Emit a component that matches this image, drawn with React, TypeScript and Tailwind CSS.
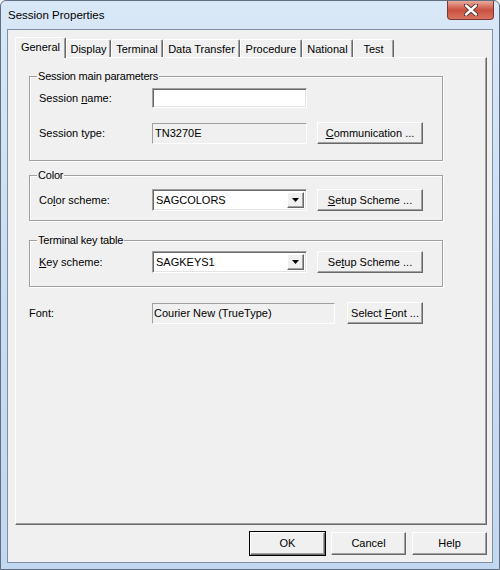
import React from 'react';

const raised =
  'border border-t-white border-l-white border-r-[#696969] border-b-[#696969] shadow-[inset_-1px_-1px_0_#a0a0a0] bg-[#f0f0f0]';
const sunken =
  'border border-t-[#a0a0a0] border-l-[#a0a0a0] border-r-white border-b-white shadow-[inset_1px_1px_0_#696969,inset_-1px_-1px_0_#e3e3e3]';

const tabs: [string, number][] = [
  ['General', 51],
  ['Display', 45],
  ['Terminal', 52],
  ['Data Transfer', 77],
  ['Procedure', 62],
  ['National', 51],
  ['Test', 41],
];

const U = ({ children }: { children: React.ReactNode }) => <span className="underline underline-offset-[1px]">{children}</span>;

function Button({ children, className = '' }: { children: React.ReactNode; className?: string }) {
  return (
    <div className={`${raised} flex items-center justify-center text-[11px] leading-none text-black ${className}`}>
      <span className="whitespace-pre">{children}</span>
    </div>
  );
}

function Combo({ value }: { value: string }) {
  return (
    <div className={`${sunken} bg-white w-[155px] h-[22px] flex items-stretch p-[2px]`}>
      <div className="flex-1 flex items-center pl-[1px] text-[11px] leading-none">{value}</div>
      <div className={`${raised} w-[17px] flex items-center justify-center`}>
        <svg width="7" height="4" viewBox="0 0 7 4">
          <path d="M0 0h7L3.5 4z" fill="#000" />
        </svg>
      </div>
    </div>
  );
}

function Group({ title, className = '', children }: { title: string; className?: string; children: React.ReactNode }) {
  return (
    <fieldset
      className={`w-[414px] border border-[#a0a0a0] shadow-[inset_1px_1px_0_#fff,1px_1px_0_#fff] pl-[9px] ${className}`}
    >
      <legend className="-ml-[2px] px-px bg-[#f0f0f0] text-[11px] leading-[13px] tracking-[-0.2px]">{title}</legend>
      {children}
    </fieldset>
  );
}

function Label({ children, w = 'w-[113px]' }: { children: React.ReactNode; w?: string }) {
  return <div className={`${w} shrink-0 text-[11px] leading-none`}>{children}</div>;
}

export default function App() {
  return (
    <div className="w-[500px] h-[570px] font-['Liberation_Sans',Arial,sans-serif] text-black">
      <div className="w-full h-full flex flex-col border border-[#5f6e80] rounded-t-[6px] bg-gradient-to-b from-[#d9e8f7] via-[#c9ddf3] to-[#c2d8f0]">
        {/* Title bar */}
        <div className="h-[28px] flex items-start justify-between shrink-0">
          <div className="pl-[7px] pt-[8px] text-[11.5px] leading-[13px]">Session Properties</div>
          <div className="mr-[5px] w-[47px] h-[19px] rounded-b-[4px] border border-t-0 border-[#7a3a33] bg-gradient-to-b from-[#e9a99c] via-[#c9503f] to-[#d8725f] flex items-center justify-center">
            <svg width="14" height="12" viewBox="0 0 14 12">
              <path d="M2 1.5L12 10.5M12 1.5L2 10.5" stroke="#4b2a25" strokeWidth="4.2" strokeLinecap="round" />
              <path d="M2 1.5L12 10.5M12 1.5L2 10.5" stroke="#fff" strokeWidth="2.4" strokeLinecap="round" />
            </svg>
          </div>
        </div>

        {/* Client area */}
        <div className="mx-[6px] h-[534px] border border-[#8091a6] bg-[#f0f0f0] flex flex-col pt-[7px] pl-[7px]">
          {/* Tabs */}
          <div className="flex items-end h-[20px] relative z-10">
            {tabs.map(([name, w], i) =>
              i === 0 ? (
                <div
                  key={name}
                  style={{ width: w }}
                  className="h-[21px] -mb-px shrink-0 bg-[#f0f0f0] border-t border-l border-white border-r border-r-[#696969] rounded-t-[2px] shadow-[inset_-1px_0_0_#a0a0a0] flex items-start justify-center pt-[3px] text-[11px] leading-[13px]"
                >
                  {name}
                </div>
              ) : (
                <div
                  key={name}
                  style={{ width: w }}
                  className="h-[18px] shrink-0 border-t border-l border-white border-r border-r-[#696969] rounded-t-[2px] shadow-[inset_-1px_0_0_#a0a0a0] flex items-start justify-center pt-[3px] text-[11px] leading-[13px]"
                >
                  {name}
                </div>
              )
            )}
          </div>

          {/* Panel */}
          <div className="w-[472px] h-[468px] border border-t-white border-l-white border-r-[#696969] border-b-[#696969] shadow-[inset_-1px_-1px_0_#a0a0a0] pl-[13px] pt-[12px]">
            <Group title="Session main parameters" className="pb-[16px]">
              <div className="flex items-center h-[20px] mt-[5px]">
                <Label>
                  Session <U>n</U>ame:
                </Label>
                <div className={`${sunken} bg-white w-[155px] h-[20px]`} />
              </div>
              <div className="flex items-center h-[22px] mt-[14px]">
                <Label>Session type:</Label>
                <div className={`${sunken} shadow-none border-[#d8d8d8] border-t-[#a0a0a0] border-l-[#a0a0a0] w-[155px] h-[21px] flex items-center pl-[2px] text-[11px] leading-none`}>
                  TN3270E
                </div>
                <Button className="ml-[10px] w-[106px] h-[22px]">
                  <U>C</U>ommunication ...
                </Button>
              </div>
            </Group>

            <Group title="Color" className="mt-[8px] pb-[9px]">
              <div className="flex items-center h-[22px] mt-[7px]">
                <Label>
                  Co<U>l</U>or scheme:
                </Label>
                <Combo value="SAGCOLORS" />
                <Button className="ml-[10px] w-[106px] h-[22px]">
                  <U>S</U>etup Scheme ...
                </Button>
              </div>
            </Group>

            <Group title="Terminal key table" className="mt-[13px] pb-[13px]">
              <div className="flex items-center h-[22px] mt-[4px]">
                <Label>
                  <U>K</U>ey scheme:
                </Label>
                <Combo value="SAGKEYS1" />
                <Button className="ml-[10px] w-[106px] h-[22px]">
                  Se<U>t</U>up Scheme ...
                </Button>
              </div>
            </Group>

            <div className="flex items-center h-[22px] mt-[15px]">
              <Label w="w-[123px]">Font:</Label>
              <div className={`${sunken} shadow-none border-[#d8d8d8] border-t-[#a0a0a0] border-l-[#a0a0a0] w-[183px] h-[21px] flex items-center pl-[1px] text-[11px] leading-none`}>
                Courier New (TrueType)
              </div>
              <Button className="ml-[12px] w-[76px] h-[22px]">
                Select <U>F</U>ont ...
              </Button>
            </div>
          </div>

          {/* Bottom buttons */}
          <div className="w-[472px] flex justify-end gap-[6px] mt-[7px]">
            <Button className="w-[75px] h-[23px] outline outline-1 outline-black">OK</Button>
            <Button className="w-[75px] h-[23px]">Cancel</Button>
            <Button className="w-[75px] h-[23px]">Help</Button>
          </div>
        </div>
      </div>
    </div>
  );
}
